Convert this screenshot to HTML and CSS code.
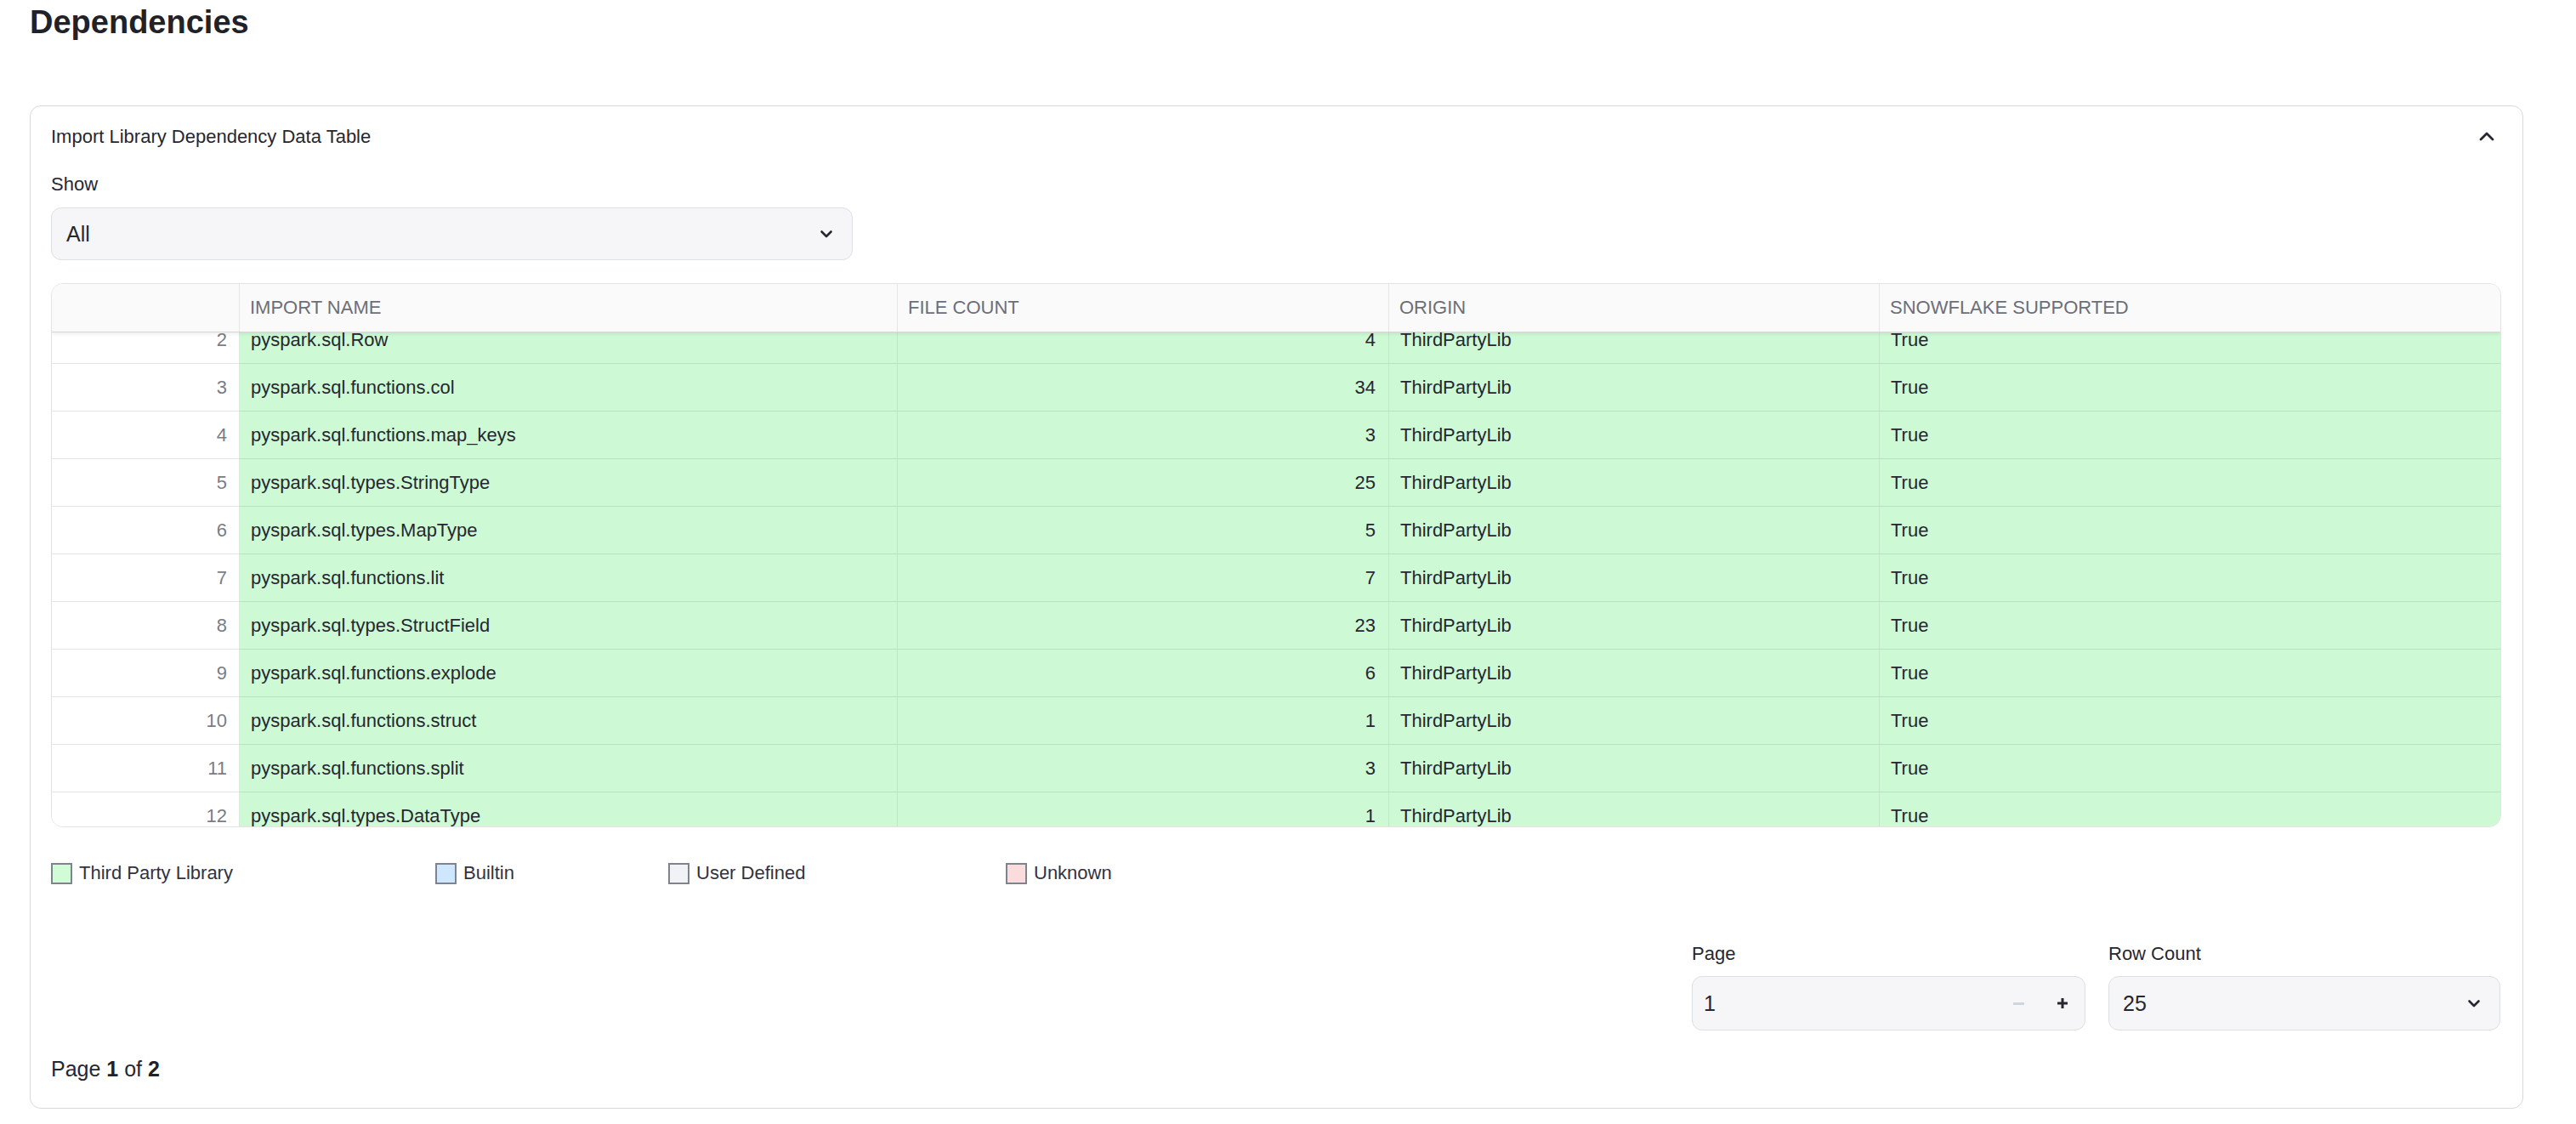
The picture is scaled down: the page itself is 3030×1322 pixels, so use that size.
FILE: index.html
```html
<!DOCTYPE html>
<html lang="en">
<head>
<meta charset="utf-8">
<title>Dependencies</title>
<link rel="stylesheet" href="styles.css">
</head>
<body>
<div class="page">
  <h1 class="title">Dependencies</h1>
  <section class="card">
    <div class="card-head">
      <span>Import Library Dependency Data Table</span>
      <svg class="chev-up" width="18" height="11" viewBox="0 0 18 11"><path d="M2 9 L9 2 L16 9" fill="none" stroke="#262730" stroke-width="2.8" stroke-linecap="round" stroke-linejoin="round"/></svg>
    </div>
    <div class="card-body">
      <div class="label show-label">Show</div>
      <div class="select show-select">
        <span>All</span>
        <svg width="16" height="10" viewBox="0 0 16 10"><path d="M2.5 2.5 L8 8 L13.5 2.5" fill="none" stroke="#262730" stroke-width="2.6" stroke-linecap="round" stroke-linejoin="round"/></svg>
      </div>

      <div class="table">
        <div class="thead">
          <div class="th"></div>
          <div class="th">IMPORT NAME</div>
          <div class="th">FILE COUNT</div>
          <div class="th">ORIGIN</div>
          <div class="th">SNOWFLAKE SUPPORTED</div>
        </div>
        <div class="tbody">
          <div class="row partial-top"><div class="td idx">2</div><div class="td">pyspark.sql.Row</div><div class="td num">4</div><div class="td">ThirdPartyLib</div><div class="td">True</div></div>
          <div class="row"><div class="td idx">3</div><div class="td">pyspark.sql.functions.col</div><div class="td num">34</div><div class="td">ThirdPartyLib</div><div class="td">True</div></div>
          <div class="row"><div class="td idx">4</div><div class="td">pyspark.sql.functions.map_keys</div><div class="td num">3</div><div class="td">ThirdPartyLib</div><div class="td">True</div></div>
          <div class="row"><div class="td idx">5</div><div class="td">pyspark.sql.types.StringType</div><div class="td num">25</div><div class="td">ThirdPartyLib</div><div class="td">True</div></div>
          <div class="row"><div class="td idx">6</div><div class="td">pyspark.sql.types.MapType</div><div class="td num">5</div><div class="td">ThirdPartyLib</div><div class="td">True</div></div>
          <div class="row"><div class="td idx">7</div><div class="td">pyspark.sql.functions.lit</div><div class="td num">7</div><div class="td">ThirdPartyLib</div><div class="td">True</div></div>
          <div class="row"><div class="td idx">8</div><div class="td">pyspark.sql.types.StructField</div><div class="td num">23</div><div class="td">ThirdPartyLib</div><div class="td">True</div></div>
          <div class="row"><div class="td idx">9</div><div class="td">pyspark.sql.functions.explode</div><div class="td num">6</div><div class="td">ThirdPartyLib</div><div class="td">True</div></div>
          <div class="row"><div class="td idx">10</div><div class="td">pyspark.sql.functions.struct</div><div class="td num">1</div><div class="td">ThirdPartyLib</div><div class="td">True</div></div>
          <div class="row"><div class="td idx">11</div><div class="td">pyspark.sql.functions.split</div><div class="td num">3</div><div class="td">ThirdPartyLib</div><div class="td">True</div></div>
          <div class="row partial-bottom"><div class="td idx">12</div><div class="td">pyspark.sql.types.DataType</div><div class="td num">1</div><div class="td">ThirdPartyLib</div><div class="td">True</div></div>
        </div>
      </div>

      <div class="legend">
        <div class="legend-item"><span class="swatch sw-third"></span>Third Party Library</div>
        <div class="legend-item"><span class="swatch sw-builtin"></span>Builtin</div>
        <div class="legend-item"><span class="swatch sw-user"></span>User Defined</div>
        <div class="legend-item"><span class="swatch sw-unknown"></span>Unknown</div>
      </div>

      <div class="pager">
        <div class="field field-page">
          <div class="label">Page</div>
          <div class="num-input">
            <span class="num-value">1</span>
            <span class="step"><span class="minus"></span></span>
            <span class="step"><svg width="14" height="14" viewBox="0 0 14 14"><path d="M7 1 V13 M1 7 H13" stroke="#262730" stroke-width="3"/></svg></span>
          </div>
        </div>
        <div class="field field-rows">
          <div class="label">Row Count</div>
          <div class="select row-select">
            <span>25</span>
            <svg width="16" height="10" viewBox="0 0 16 10"><path d="M2.5 2.5 L8 8 L13.5 2.5" fill="none" stroke="#262730" stroke-width="2.6" stroke-linecap="round" stroke-linejoin="round"/></svg>
          </div>
        </div>
      </div>

      <p class="page-of">Page <b>1</b> of <b>2</b></p>
    </div>
  </section>
</div>
</body>
</html>
```

FILE: styles.css
```css
* { box-sizing: border-box; }

body {
  margin: 0;
  background: #ffffff;
  font-family: "Liberation Sans", Arial, Helvetica, sans-serif;
  color: #31333f;
}

.page {
  padding: 3px 62px 0 35px;
}

.title {
  margin: 0;
  font-size: 38px;
  line-height: 46px;
  font-weight: 700;
  color: #1f2229;
}

.card {
  margin-top: 75px;
  border: 1px solid #d9d9dc;
  border-radius: 13px;
  padding: 0 25px 28px 24px;
}

.card-head {
  display: flex;
  justify-content: space-between;
  align-items: center;
  padding: 23px 0 15px;
  font-size: 22px;
  line-height: 26px;
  color: #262730;
}

.chev-up {
  margin-right: 8px;
  margin-top: -2px;
}

.label {
  font-size: 22px;
  line-height: 26px;
  color: #262730;
}

.show-label {
  margin-top: 15px;
}

.select {
  display: flex;
  align-items: center;
  justify-content: space-between;
  background: #f6f6f8;
  border: 1px solid #dcdfe4;
  border-radius: 12px;
  padding: 0 22px 0 17px;
  font-size: 25px;
  color: #262730;
}

.show-select {
  width: 943px;
  height: 62px;
  margin-top: 14px;
}

.table {
  margin-top: 27px;
  border: 1px solid #e3e3e6;
  border-radius: 14px;
  overflow: hidden;
}

.thead,
.row {
  display: grid;
  grid-template-columns: 221px 774px 578px 577px 1fr;
}

.thead {
  height: 57px;
  background: #fafafa;
  border-bottom: 1px solid #d6d6d8;
  box-shadow: 0 2px 4px rgba(0, 0, 0, 0.07);
  position: relative;
  z-index: 1;
}

.th {
  display: flex;
  align-items: center;
  padding: 0 12px;
  font-size: 22px;
  color: #6c6f77;
  border-right: 1px solid #e6e6e8;
}

.th:last-child { border-right: 0; }

.td {
  height: 56px;
  display: flex;
  align-items: center;
  padding: 0 13px;
  font-size: 22px;
  color: #262730;
  background: #cdf9d4;
  border-bottom: 1px solid #b8e2c0;
  border-right: 1px solid #c0e8c8;
  white-space: nowrap;
}

.td:last-child { border-right: 0; }

.row.partial-top .td {
  height: 37px;
  padding-bottom: 19px;
  line-height: 16px;
}

.row.partial-bottom .td {
  height: 40px;
  padding-top: 15px;
  align-items: flex-start;
  line-height: 25px;
  border-bottom: 0;
}

.td.idx {
  background: #ffffff;
  justify-content: flex-end;
  padding-right: 14px;
  color: #7a7d85;
  border-bottom-color: #e4e4e6;
  border-right-color: #e4e4e6;
}

.td.num {
  justify-content: flex-end;
  padding-right: 15px;
}

.legend {
  display: grid;
  grid-template-columns: 452px 274px 397px auto;
  align-items: center;
  height: 26px;
  margin-top: 41px;
}

.legend-item {
  display: flex;
  align-items: center;
  gap: 8px;
  font-size: 22px;
  line-height: 26px;
  color: #31333f;
}

.swatch {
  width: 25px;
  height: 25px;
  border: 2px solid #80838e;
  flex: none;
}

.sw-third { background: #d2fbd8; }
.sw-builtin { background: #cfe7fc; }
.sw-user { background: #f0f2f6; }
.sw-unknown { background: #fbdcdc; }

.pager {
  display: flex;
  justify-content: flex-end;
  gap: 27px;
  margin-top: 69px;
  padding-right: 1px;
}

.field-page { width: 463px; }
.field-rows { width: 461px; }

.field .label {
  margin-bottom: 13px;
}

.num-input {
  height: 64px;
  display: flex;
  align-items: center;
  background: #f6f6f8;
  border: 1px solid #dcdfe4;
  border-radius: 12px;
  padding-left: 13px;
  font-size: 25px;
  color: #262730;
}

.num-value { flex: 1; }

.step {
  width: 52px;
  height: 100%;
  display: flex;
  align-items: center;
  justify-content: center;
}

.minus {
  width: 13px;
  height: 3px;
  background: #d0d5dd;
}

.row-select {
  height: 64px;
  padding-left: 16px;
}

.page-of {
  margin: 27px 0 0;
  font-size: 25px;
  line-height: 36px;
  color: #262730;
}

.page-of b {
  font-weight: 700;
  color: #1f2229;
}
```
